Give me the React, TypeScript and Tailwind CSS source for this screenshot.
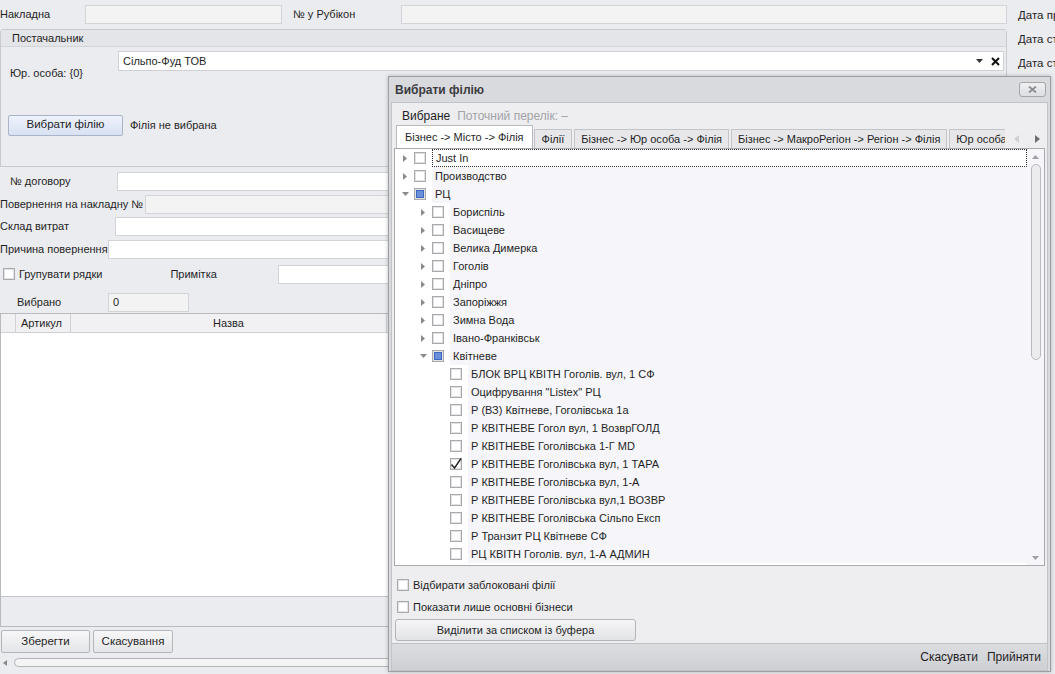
import React from 'react';

type Node = { label: string; level: number; state?: 'none' | 'partial' | 'checked'; arrow?: 'closed' | 'open' | null; focus?: boolean };

const tree: Node[] = [
  { label: 'Just In', level: 0, arrow: 'closed', focus: true },
  { label: 'Производство', level: 0, arrow: 'closed' },
  { label: 'РЦ', level: 0, arrow: 'open', state: 'partial' },
  { label: 'Бориспіль', level: 1, arrow: 'closed' },
  { label: 'Васищеве', level: 1, arrow: 'closed' },
  { label: 'Велика Димерка', level: 1, arrow: 'closed' },
  { label: 'Гоголів', level: 1, arrow: 'closed' },
  { label: 'Дніпро', level: 1, arrow: 'closed' },
  { label: 'Запоріжжя', level: 1, arrow: 'closed' },
  { label: 'Зимна Вода', level: 1, arrow: 'closed' },
  { label: 'Івано-Франківськ', level: 1, arrow: 'closed' },
  { label: 'Квітневе', level: 1, arrow: 'open', state: 'partial' },
  { label: 'БЛОК ВРЦ КВІТН Гоголів. вул, 1 СФ', level: 2 },
  { label: 'Оцифрування "Listex" РЦ', level: 2 },
  { label: 'Р (ВЗ) Квітневе, Гоголівська 1а', level: 2 },
  { label: 'Р КВІТНЕВЕ Гогол вул, 1 ВозврГОЛД', level: 2 },
  { label: 'Р КВІТНЕВЕ Гоголівська 1-Г MD', level: 2 },
  { label: 'Р КВІТНЕВЕ Гоголівська вул, 1 ТАРА', level: 2, state: 'checked' },
  { label: 'Р КВІТНЕВЕ Гоголівська вул, 1-А', level: 2 },
  { label: 'Р КВІТНЕВЕ Гоголівська вул,1 ВОЗВР', level: 2 },
  { label: 'Р КВІТНЕВЕ Гоголівська Сільпо Експ', level: 2 },
  { label: 'Р Транзит РЦ Квітневе СФ', level: 2 },
  { label: 'РЦ КВІТН Гоголів. вул, 1-А АДМИН', level: 2 },
];

function Check({ state = 'none' }: { state?: 'none' | 'partial' | 'checked' }) {
  return (
    <svg width="12" height="12" viewBox="0 0 12 12" className="shrink-0">
      <rect x="0.5" y="0.5" width="11" height="11" fill="#ffffff" stroke="#a9a9ad" />
      <rect x="1.5" y="1.5" width="9" height="9" fill="none" stroke="#e3e3e6" />
      {state === 'partial' && <rect x="2.5" y="2.5" width="7" height="7" fill="#6a8fd8" stroke="#3d67c0" />}
      {state === 'checked' && <path d="M1.5 6.5 L4.5 10 L11 0.5" fill="none" stroke="#222" strokeWidth="1.4" />}
    </svg>
  );
}

function Arrow({ kind }: { kind?: 'closed' | 'open' | null }) {
  if (!kind) return <span className="w-[18px] shrink-0" />;
  return (
    <span className="flex w-[18px] shrink-0 items-center justify-center">
      {kind === 'closed' ? (
        <svg width="4" height="7" viewBox="0 0 4 7"><path d="M0 0 L4 3.5 L0 7 Z" fill="#8a8a8a" /></svg>
      ) : (
        <svg width="7" height="5" viewBox="0 0 7 5"><path d="M0 0 L7 0 L3.5 4 Z" fill="#8a8a8a" /></svg>
      )}
    </span>
  );
}

function Field({ w, disabled, children }: { w: string; disabled?: boolean; children?: React.ReactNode }) {
  return (
    <div className={`${w} h-[19px] shrink-0 border border-[#d3d4d8] px-[4px] leading-[17px] ${disabled ? 'bg-[#f3f3f4]' : 'bg-white'}`}>{children}</div>
  );
}

export default function App() {
  return (
    <div className="relative h-[674px] w-[1055px] overflow-hidden bg-[#ebecef] font-['Liberation_Sans',Arial,sans-serif] text-[11px] text-[#1f1f1f]">
      <div className="flex">
        {/* main form */}
        <div className="w-[1007px] shrink-0">
          <div className="flex h-[29px] items-center pb-[1px]">
            <span className="w-[85px]">Накладна</span>
            <Field w="w-[197px]" disabled />
            <span className="ml-[11px] w-[108px]">№ у Рубікон</span>
            <Field w="w-[606px]" disabled />
          </div>

          <div className="h-[138px] rounded-t-[3px] border border-[#c9cace]">
            <div className="h-[17px] border-b border-[#d3d4d8] bg-[#e4e5e9] pl-[11px] leading-[16px]">Постачальник</div>
            <div className="flex pt-[4px]">
              <span className="w-[117px] pl-[9px] pt-[14px]">Юр. особа: {'{0}'}</span>
              <div className="flex h-[20px] w-[886px] items-center border border-[#cfd0d4] bg-white pl-[4px]">
                <span className="flex-1">Сільпо-Фуд ТОВ</span>
                <svg width="7" height="4" viewBox="0 0 7 4" className="mr-[8px]"><path d="M0 0 L7 0 L3.5 4 Z" fill="#333" /></svg>
                <svg width="9" height="9" viewBox="0 0 9 9" className="mr-[3px]"><path d="M1 1 L8 8 M8 1 L1 8" stroke="#111" strokeWidth="2" /></svg>
              </div>
            </div>
            <div className="mt-[33px] flex items-center pl-[7px]">
              <button className="h-[21px] w-[115px] rounded-[2px] border border-[#a9b4c8] bg-gradient-to-b from-[#eef2fb] to-[#d8e1f3] text-[11.5px]">Вибрати філію</button>
              <span className="ml-[7px]">Філія не вибрана</span>
            </div>
          </div>

          <div className="mt-[3px] flex h-[22px] items-center">
            <span className="w-[117px] pl-[10px]">№ договору</span>
            <Field w="w-[890px]" />
          </div>
          <div className="mt-[1px] flex h-[22px] items-center">
            <span className="w-[145px] overflow-hidden whitespace-nowrap">Повернення на накладну №</span>
            <Field w="w-[862px]" disabled />
          </div>
          <div className="flex h-[22px] items-center">
            <span className="w-[115px]">Склад витрат</span>
            <Field w="w-[892px]" />
          </div>
          <div className="mt-[1px] flex h-[22px] items-center">
            <span className="w-[108px] whitespace-nowrap">Причина повернення</span>
            <Field w="w-[899px]" />
          </div>
          <div className="mt-[3px] flex h-[22px] items-center">
            <span className="ml-[3px] mr-[4px]"><Check /></span>
            <span className="w-[152px]">Групувати рядки</span>
            <span className="w-[108px]">Примітка</span>
            <Field w="w-[729px]" />
          </div>
          <div className="mt-[7px] flex h-[21px] items-center">
            <span className="w-[108px] pl-[17px]">Вибрано</span>
            <Field w="w-[81px]" disabled>0</Field>
          </div>

          <div className="h-[314px] border border-[#b9babe] bg-white">
            <div className="flex h-[19px] border-b border-[#d0d1d5] bg-[#f1f1f3]">
              <div className="w-[15px] border-r border-[#d0d1d5]" />
              <div className="w-[55px] border-r border-[#d0d1d5] pl-[5px] leading-[18px]">Артикул</div>
              <div className="w-[316px] border-r border-[#d0d1d5] text-center leading-[18px]">Назва</div>
            </div>
            <div className="h-[263px]" />
            <div className="h-[30px] border-t border-[#c4c5c9] bg-[#ebecef]" />
          </div>

          <div className="mt-[3px] flex gap-[3px] pl-[1px]">
            <button className="h-[23px] w-[89px] rounded-[2px] border border-[#b5b6ba] bg-gradient-to-b from-[#f7f7f8] to-[#e4e5e8] text-[11.5px]">Зберегти</button>
            <button className="h-[23px] w-[80px] rounded-[2px] border border-[#b5b6ba] bg-gradient-to-b from-[#f7f7f8] to-[#e4e5e8] text-[11.5px]">Скасування</button>
          </div>
          <div className="mt-[3px] flex h-[13px] items-center">
            <svg width="4" height="6" viewBox="0 0 4 6" className="ml-[3px] mr-[7px]"><path d="M4 0 L0 3 L4 6 Z" fill="#888" /></svg>
            <div className="h-[9px] flex-1 rounded-[5px] border border-[#b3b4b8] bg-[#f4f4f5]" />
          </div>
        </div>

        {/* right column */}
        <div className="ml-[11px] flex flex-col gap-[10px] whitespace-nowrap pt-[8px] text-[11.5px] leading-[14px]">
          <span>Дата пр</span>
          <span>Дата ст</span>
          <span>Дата ст</span>
        </div>
      </div>

      {/* dialog */}
      <div className="absolute left-[388px] top-[76px] flex h-[596px] w-[663px] flex-col border border-[#9d9ea3] bg-[#d9dade] shadow-[0_0_4px_rgba(0,0,0,0.25)]">
        <div className="relative flex h-[25px] items-center pl-[6px] text-[12px] font-bold text-[#3b3b3f]">
          Вибрати філію
          <div className="absolute right-[4px] top-[5px] flex h-[15px] w-[27px] items-center justify-center rounded-[3px] border border-[#a5a6aa] bg-gradient-to-b from-[#f1f1f3] to-[#dcdde1]">
            <svg width="9" height="7" viewBox="0 0 9 7"><path d="M1 0.5 L8 6.5 M8 0.5 L1 6.5" stroke="#8b8c90" strokeWidth="1.8" /></svg>
          </div>
        </div>

        <div className="mx-[2px] flex flex-1 flex-col border border-[#c2c3c7] bg-[#eeeef1]">
          <div className="flex h-[22px] items-end gap-[7px] pl-[10px] text-[12px]">
            <span className="text-[#222]">Вибране</span>
            <span className="text-[#a2a3a7]">Поточний перелік: –</span>
          </div>

          <div className="ml-[4px] mt-[1px] flex h-[22px] items-end text-[11px]">
            <div className="z-10 flex h-[23px] items-center border border-b-0 border-[#b8b9bd] bg-white px-[8px]">Бізнес -&gt; Місто -&gt; Філія</div>
            <div className="ml-[1px] flex h-[19px] items-center border border-b-0 border-[#c3c4c8] bg-[#e7e7ea] px-[7px]">Філії</div>
            <div className="ml-[2px] flex h-[19px] items-center border border-b-0 border-[#c3c4c8] bg-[#e7e7ea] px-[6px]">Бізнес -&gt; Юр особа -&gt; Філія</div>
            <div className="ml-[2px] flex h-[19px] items-center border border-b-0 border-[#c3c4c8] bg-[#e7e7ea] px-[6px]">Бізнес -&gt; МакроРегіон -&gt; Регіон -&gt; Філія</div>
            <div className="ml-[2px] flex h-[19px] w-[56px] items-center overflow-hidden whitespace-nowrap border border-b-0 border-r-0 border-[#c3c4c8] bg-[#e7e7ea] pl-[6px]">Юр особа</div>
            <div className="flex h-[19px] items-center gap-[16px] pl-[9px]">
              <svg width="5" height="8" viewBox="0 0 5 8"><path d="M5 0 L0 4 L5 8 Z" fill="#d0d0d4" /></svg>
              <svg width="5" height="8" viewBox="0 0 5 8"><path d="M0 0 L5 4 L0 8 Z" fill="#6d6e72" /></svg>
            </div>
          </div>

          <div className="mx-[2px] flex h-[418px] border border-[#a9aaae] bg-white text-[11px]">
            <div className="flex-1 overflow-hidden">
              {tree.map((n, i) => (
                <div key={i} className="flex h-[18px] items-center" style={{ paddingLeft: n.level * 18 + 1 }}>
                  <Arrow kind={n.arrow} />
                  <Check state={n.state} />
                  <div className={`ml-[6px] flex h-full flex-1 items-center whitespace-nowrap pl-[3px] ${n.focus ? 'border border-dotted border-[#333] bg-white' : 'bg-[#f6f6fa]'}`}>
                    {n.label}
                  </div>
                </div>
              ))}
            </div>
            <div className="flex w-[17px] flex-col items-center bg-[#f6f6fa] pt-[6px] pb-[5px]">
              <svg width="7" height="4" viewBox="0 0 7 4"><path d="M0 4 L3.5 0 L7 4 Z" fill="#a0a1a5" /></svg>
              <div className="mt-[5px] h-[196px] w-[10px] rounded-[5px] border border-[#b9babe] bg-[#ececef]" />
              <div className="flex-1" />
              <svg width="7" height="4" viewBox="0 0 7 4"><path d="M0 0 L7 0 L3.5 4 Z" fill="#a0a1a5" /></svg>
            </div>
          </div>

          <div className="mt-[11px] flex h-[16px] items-center gap-[4px] pl-[5px]">
            <Check /> <span>Відбирати заблоковані філії</span>
          </div>
          <div className="mt-[6px] flex h-[16px] items-center gap-[4px] pl-[5px]">
            <Check /> <span>Показати лише основні бізнеси</span>
          </div>
          <button className="ml-[3px] mt-[4px] h-[22px] w-[241px] rounded-[3px] border border-[#b3b4b8] bg-gradient-to-b from-[#f6f6f7] to-[#e2e3e6]">Виділити за списком із буфера</button>
          <div className="flex-1" />
          <div className="flex h-[27px] items-center justify-end gap-[9px] border-t border-[#c0c1c5] bg-gradient-to-b from-[#dcdde1] to-[#cfd0d4] pr-[6px] text-[12px]">
            <span>Скасувати</span>
            <span>Прийняти</span>
          </div>
        </div>
      </div>
    </div>
  );
}
